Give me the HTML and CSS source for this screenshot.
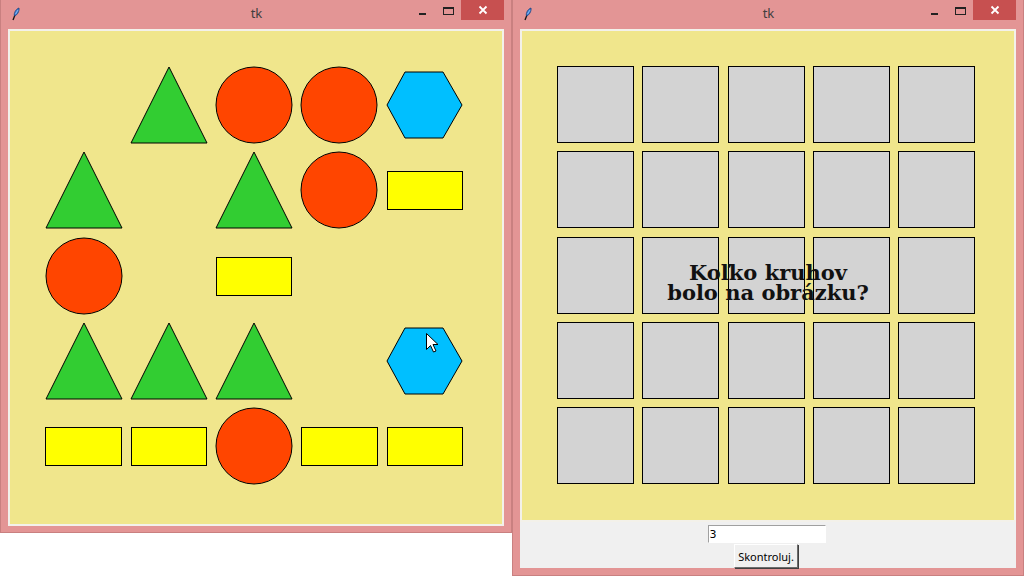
FILE: index.html
```html
<!DOCTYPE html>
<html lang="sk">
<head>
  <meta charset="UTF-8">
  <title>tk</title>
  <link rel="stylesheet" href="styles.css">
</head>
<body>

  <div class="desktop">

    <!-- Window 1: the picture with shapes -->
    <div class="window win-left">
      <div class="titlebar">
        <svg class="app-icon" width="16" height="16" viewBox="0 0 16 16">
          <path d="M5 14 L7 9" stroke="#111" stroke-width="1.3"/>
          <path d="M6.5 10 C5.5 7 8 3 11 2 C11.5 5 9.5 9 6.5 10 Z" fill="#3a7fd5" stroke="#1c3f7a" stroke-width="0.8"/>
          <path d="M7.5 8 L10 4" stroke="#9cc7f5" stroke-width="0.8"/>
        </svg>
        <span class="title">tk</span>
        <div class="controls">
          <span class="btn-min"></span>
          <span class="btn-max"></span>
          <span class="btn-close">
            <svg width="10" height="10" viewBox="0 0 10 10"><path d="M1.5 1.5 L8.5 8.5 M8.5 1.5 L1.5 8.5" stroke="#fff" stroke-width="1.8"/></svg>
          </span>
        </div>
      </div>
      <div class="client">
        <div class="canvas">
          <svg width="492" height="493" viewBox="10 31 492 493">
            <g stroke="#000" stroke-width="1">
              <!-- row 1 -->
              <polygon points="169,67 207,143 131,143" fill="#32cd32"/>
              <circle cx="254" cy="105" r="38" fill="#ff4500"/>
              <circle cx="339" cy="105" r="38" fill="#ff4500"/>
              <polygon points="405,72 443,72 462,105 443,138 405,138 387,105" fill="#00bfff"/>
              <!-- row 2 -->
              <polygon points="84,152 122,228 46,228" fill="#32cd32"/>
              <polygon points="254,152 292,228 216,228" fill="#32cd32"/>
              <circle cx="339" cy="190" r="38" fill="#ff4500"/>
              <rect x="387.5" y="171.5" width="75" height="38" fill="#ffff00"/>
              <!-- row 3 -->
              <circle cx="84" cy="276" r="38" fill="#ff4500"/>
              <rect x="216.5" y="257.5" width="75" height="38" fill="#ffff00"/>
              <!-- row 4 -->
              <polygon points="84,323 122,399 46,399" fill="#32cd32"/>
              <polygon points="169,323 207,399 131,399" fill="#32cd32"/>
              <polygon points="254,323 292,399 216,399" fill="#32cd32"/>
              <polygon points="405,328 443,328 462,361 443,394 405,394 387,361" fill="#00bfff"/>
              <!-- row 5 -->
              <rect x="45.5" y="427.5" width="76" height="38" fill="#ffff00"/>
              <rect x="131.5" y="427.5" width="75" height="38" fill="#ffff00"/>
              <circle cx="254" cy="446" r="38" fill="#ff4500"/>
              <rect x="301.5" y="427.5" width="76" height="38" fill="#ffff00"/>
              <rect x="387.5" y="427.5" width="75" height="38" fill="#ffff00"/>
            </g>
            <!-- mouse pointer -->
            <polygon points="426.5,333.5 426.5,349.5 430.5,345.5 433.5,352 436,351 433,344.5 438,344.5" fill="#fff" stroke="#000" stroke-width="1"/>
          </svg>
        </div>
      </div>
    </div>

    <!-- Window 2: the question -->
    <div class="window win-right">
      <div class="titlebar">
        <svg class="app-icon" width="16" height="16" viewBox="0 0 16 16">
          <path d="M5 14 L7 9" stroke="#111" stroke-width="1.3"/>
          <path d="M6.5 10 C5.5 7 8 3 11 2 C11.5 5 9.5 9 6.5 10 Z" fill="#3a7fd5" stroke="#1c3f7a" stroke-width="0.8"/>
          <path d="M7.5 8 L10 4" stroke="#9cc7f5" stroke-width="0.8"/>
        </svg>
        <span class="title">tk</span>
        <div class="controls">
          <span class="btn-min"></span>
          <span class="btn-max"></span>
          <span class="btn-close">
            <svg width="10" height="10" viewBox="0 0 10 10"><path d="M1.5 1.5 L8.5 8.5 M8.5 1.5 L1.5 8.5" stroke="#fff" stroke-width="1.8"/></svg>
          </span>
        </div>
      </div>
      <div class="client">
        <div class="canvas canvas-quiz">
          <div class="tiles">
            <div class="tile"></div><div class="tile"></div><div class="tile"></div><div class="tile"></div><div class="tile"></div>
            <div class="tile"></div><div class="tile"></div><div class="tile"></div><div class="tile"></div><div class="tile"></div>
            <div class="tile"></div><div class="tile"></div><div class="tile"></div><div class="tile"></div><div class="tile"></div>
            <div class="tile"></div><div class="tile"></div><div class="tile"></div><div class="tile"></div><div class="tile"></div>
            <div class="tile"></div><div class="tile"></div><div class="tile"></div><div class="tile"></div><div class="tile"></div>
          </div>
          <div class="question">Koľko kruhov<br>bolo na obrázku?</div>
        </div>
        <div class="answer-bar">
          <input type="text" class="answer" value="3">
          <button type="button" class="check-btn">Skontroluj.</button>
        </div>
      </div>
    </div>

  </div>

</body>
</html>
```

FILE: styles.css
```css
/* Reset */
* {
  margin: 0;
  padding: 0;
  box-sizing: border-box;
}

body {
  background: #fff;
  font-family: 'DejaVu Sans', sans-serif;
  width: 1024px;
  height: 576px;
  overflow: hidden;
}

.desktop {
  position: relative;
  width: 1024px;
  height: 576px;
}

/* Window frame */
.window {
  position: absolute;
  top: 0;
  background: #e39595;
  border: 1px solid #c98080;
  border-top: none;
  display: flex;
  flex-direction: column;
}

.win-left {
  left: 0;
  width: 512px;
  height: 533px;
}

.win-right {
  left: 512px;
  width: 512px;
  height: 576px;
}

.titlebar {
  height: 29px;
  display: flex;
  align-items: flex-start;
  padding-left: 7px;
  padding-right: 7px;
}

.app-icon {
  margin-top: 6px;
  width: 16px;
  height: 16px;
}

.title {
  flex: 1;
  text-align: center;
  font-family: 'Noto Sans', 'DejaVu Sans', sans-serif;
  font-size: 13px;
  color: #3f3f3f;
  line-height: 29px;
  padding-left: 70px;
  margin-top: -1px;
}

.controls {
  display: flex;
  align-items: flex-start;
}

.btn-min {
  width: 7px;
  height: 2px;
  background: #222;
  margin-top: 13px;
  margin-right: 17px;
}

.btn-max {
  width: 11px;
  height: 8px;
  border: 1px solid #222;
  border-top-width: 2px;
  margin-top: 7px;
  margin-right: 7px;
}

.btn-close {
  width: 43px;
  height: 20px;
  background: #c75050;
  display: flex;
  align-items: center;
  justify-content: center;
}

/* Client area */
.client {
  flex: 1;
  margin: 0 7px 6px 7px;
  background: #f0f0f0;
  display: flex;
  flex-direction: column;
}

.win-right .client {
  margin-bottom: 7px;
}

.canvas {
  background: #f0e68c;
  border: 2px solid #f3f1ea;
  flex: 1;
}

.canvas svg {
  display: block;
}

/* Quiz canvas */
.canvas-quiz {
  flex: none;
  height: 493px;
  position: relative;
  padding: 35px 0 0 35px;
}

.tiles {
  display: grid;
  grid-template-columns: repeat(5, 77px);
  grid-auto-rows: 77px;
  column-gap: 8.3px;
  row-gap: 8.3px;
}

.tile {
  background: #d3d3d3;
  border: 1px solid #000;
}

.question {
  position: absolute;
  left: 0;
  right: 0;
  top: 232px;
  text-align: center;
  font-family: 'DejaVu Serif', serif;
  font-weight: bold;
  font-size: 21px;
  line-height: 20px;
  color: #111;
}

/* Entry and button */
.answer-bar {
  flex: 1;
  display: flex;
  flex-direction: column;
  align-items: center;
  padding-top: 3px;
}

.answer {
  width: 118px;
  height: 18px;
  margin-left: -3px;
  border: 1px solid #a0a0a0;
  border-right-color: #fff;
  border-bottom-color: #fff;
  background: #fff;
  font-family: 'DejaVu Sans', sans-serif;
  font-size: 11px;
  padding-left: 1px;
  color: #000;
  outline: none;
}

.check-btn {
  margin-top: 1px;
  margin-left: -4px;
  width: 64px;
  height: 24px;
  background: #f0f0f0;
  border: 1px solid #fff;
  border-right-color: #6d6d6d;
  border-bottom-color: #6d6d6d;
  box-shadow: 1px 1px 0 #404040;
  font-family: 'Noto Sans', 'DejaVu Sans', sans-serif;
  font-size: 11px;
  color: #000;
}
```
